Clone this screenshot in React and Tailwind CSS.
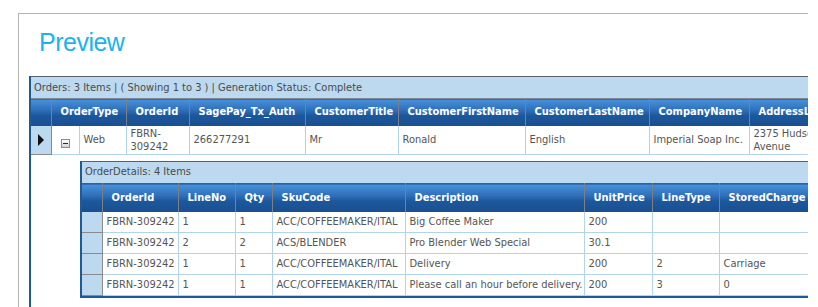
import React from 'react';

const font = "font-['DejaVu_Sans_Condensed','Liberation_Sans',sans-serif]";
const headBg = 'bg-[linear-gradient(to_bottom,#4891dc_0%,#2e6fb8_40%,#1c579b_60%,#1a4f91_100%)]';

const mainHeaders = [
  { label: 'OrderType', span: 2 },
  { label: 'OrderId' },
  { label: 'SagePay_Tx_Auth' },
  { label: 'CustomerTitle' },
  { label: 'CustomerFirstName' },
  { label: 'CustomerLastName' },
  { label: 'CompanyName' },
  { label: 'AddressLine1' },
];

const order = ['Web', 'FBRN-309242', '266277291', 'Mr', 'Ronald', 'English', 'Imperial Soap Inc.', '2375 Hudson Avenue'];

const detailHeaders = ['OrderId', 'LineNo', 'Qty', 'SkuCode', 'Description', 'UnitPrice', 'LineType', 'StoredCharge'];

const details = [
  ['FBRN-309242', '1', '1', 'ACC/COFFEEMAKER/ITAL', 'Big Coffee Maker', '200', '', ''],
  ['FBRN-309242', '2', '2', 'ACS/BLENDER', 'Pro Blender Web Special', '30.1', '', ''],
  ['FBRN-309242', '1', '1', 'ACC/COFFEEMAKER/ITAL', 'Delivery', '200', '2', 'Carriage'],
  ['FBRN-309242', '1', '1', 'ACC/COFFEEMAKER/ITAL', 'Please call an hour before delivery.', '200', '3', '0'],
];

function HeadCell({ children, span }) {
  return (
    <th
      colSpan={span}
      className={`${headBg} border-r border-[#7c7f86] px-[9px] text-left text-[11px] font-bold text-white whitespace-nowrap overflow-hidden`}
    >
      {children}
    </th>
  );
}

function ExpandIcon() {
  return (
    <span className="inline-flex w-[9px] h-[9px] items-center justify-center border border-[#8c8c8c] bg-gradient-to-b from-white to-[#d2d2d2]">
      <span className="w-[5px] h-[1px] bg-[#2b2b2b]" />
    </span>
  );
}

function DetailGrid() {
  return (
    <div className="border-l-2 border-b-2 border-[#1e5a9a]">
      <div className="h-[22px] border-t border-[#56606b] bg-[#bcd9ef] pl-[3px] flex items-center text-[11px] text-[#4a4a4a]">
        OrderDetails: 4 Items
      </div>
      <table className="table-fixed border-collapse w-[737px]">
        <colgroup>
          <col className="w-[20px]" />
          <col className="w-[76px]" />
          <col className="w-[57px]" />
          <col className="w-[37px]" />
          <col className="w-[133px]" />
          <col className="w-[179px]" />
          <col className="w-[68px]" />
          <col className="w-[67px]" />
          <col className="w-[100px]" />
        </colgroup>
        <thead>
          <tr className="h-[28px] border-t border-[#2f619b]">
            <th className={`${headBg} border-r border-[#7c7f86]`} />
            {detailHeaders.map((h) => (
              <HeadCell key={h}>{h}</HeadCell>
            ))}
          </tr>
        </thead>
        <tbody>
          {details.map((row, i) => (
            <tr key={i} className="h-[21px]">
              <td className="bg-[#bcd9ef] border-r border-b border-[#8a8a8a]" />
              {row.map((v, j) => (
                <td
                  key={j}
                  className="border-r border-b border-[#b3d2ec] px-[4px] text-[11px] text-[#555] whitespace-nowrap overflow-hidden"
                >
                  {v}
                </td>
              ))}
            </tr>
          ))}
        </tbody>
      </table>
    </div>
  );
}

export default function App() {
  return (
    <div className={`w-[818px] h-[307px] overflow-hidden bg-white pt-[13px] pl-[18px] ${font}`}>
      <div className="w-[790px] h-[300px] border-l border-t border-[#b3b3b3]">
        <h1 className="pt-[16px] pl-[20px] text-[25px] leading-[25px] tracking-[-0.5px] text-[#1db2ef] font-['Liberation_Sans',sans-serif]">
          Preview
        </h1>
        <div className="mt-[21px] ml-[10px] w-[779px] h-[240px] overflow-hidden border-l-2 border-[#1e5a9a]">
          <div className="h-[22px] border-t border-[#56606b] bg-[#bcd9ef] pl-[3px] pt-[1px] flex items-center text-[11px] text-[#4a4a4a] whitespace-nowrap">
            Orders: 3 Items | ( Showing 1 to 3 ) | Generation Status: Complete
          </div>
          <table className="table-fixed border-collapse w-[818px]">
            <colgroup>
              <col className="w-[20px]" />
              <col className="w-[28px]" />
              <col className="w-[47px]" />
              <col className="w-[63px]" />
              <col className="w-[116px]" />
              <col className="w-[93px]" />
              <col className="w-[127px]" />
              <col className="w-[124px]" />
              <col className="w-[100px]" />
              <col className="w-[100px]" />
            </colgroup>
            <thead>
              <tr className="h-[27px] border-t border-[#7d8893]">
                <th className={`${headBg} border-r border-[#7c7f86]`} />
                {mainHeaders.map((h) => (
                  <HeadCell key={h.label} span={h.span}>
                    {h.label}
                  </HeadCell>
                ))}
              </tr>
            </thead>
            <tbody>
              <tr className="h-[29px]">
                <td className="bg-[#bcd9ef] border-r border-b border-[#8a8a8a] text-center">
                  <span className="inline-block w-0 h-0 border-y-[6px] border-y-transparent border-l-[6px] border-l-[#111] align-middle" />
                </td>
                <td className="border-r border-b border-[#b3d2ec] text-center leading-none">
                  <ExpandIcon />
                </td>
                {order.map((v, i) => (
                  <td
                    key={i}
                    className="border-r border-b border-[#b3d2ec] px-[4px] text-[11px] leading-[13px] text-[#555] overflow-hidden"
                  >
                    {i === 1 ? (
                      <>
                        FBRN-
                        <br />
                        309242
                      </>
                    ) : i === 7 ? (
                      <>
                        2375 Hudson
                        <br />
                        Avenue
                      </>
                    ) : (
                      v
                    )}
                  </td>
                ))}
              </tr>
              <tr>
                <td colSpan={2} />
                <td colSpan={8} className="pt-[6px] pl-[1px] align-top">
                  <DetailGrid />
                </td>
              </tr>
            </tbody>
          </table>
        </div>
      </div>
    </div>
  );
}
